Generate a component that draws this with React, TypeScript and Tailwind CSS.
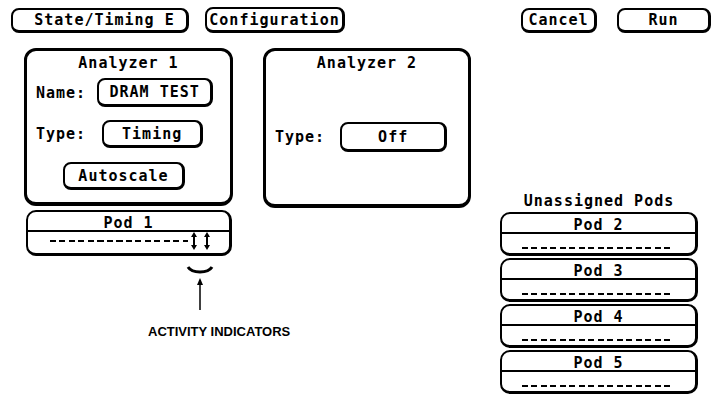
import type { ReactNode } from "react";

const mono = "font-['DejaVu_Sans_Mono',monospace] font-bold text-[15px] leading-[16px] tracking-[1px]";

function Btn({ children, className = "" }: { children: ReactNode; className?: string }) {
  return (
    <div
      className={`flex items-center justify-center rounded-[8px] border-2 border-b-[3px] border-r-[3px] border-black ${className}`}
    >
      {children}
    </div>
  );
}

function Dashes({ className = "" }: { className?: string }) {
  return (
    <div
      className={`h-[2px] bg-[repeating-linear-gradient(to_right,#000_0_6px,transparent_6px_9.5px)] ${className}`}
    />
  );
}

function Indicator() {
  return (
    <svg width="8" height="18" viewBox="0 0 8 18" className="shrink-0">
      <polygon points="4,0 1,5 7,5" fill="#000" />
      <line x1="4" y1="4" x2="4" y2="14" stroke="#000" strokeWidth="2" />
      <polygon points="1,13 7,13 4,18" fill="#000" />
    </svg>
  );
}

function Pod({ name, children, className = "" }: { name: string; children?: ReactNode; className?: string }) {
  return (
    <div className={`flex flex-col rounded-[10px] border-2 border-b-[3px] border-r-[3px] border-black ${className}`}>
      <div className="h-[20px] shrink-0 border-b-2 border-black pt-[3px] text-center">{name}</div>
      <div className="flex flex-1 items-end pb-[3px]">{children}</div>
    </div>
  );
}

export default function App() {
  return (
    <div className={`relative h-[396px] w-[713px] overflow-hidden bg-white text-black ${mono}`}>
      {/* top row */}
      <div className="flex items-start pl-[11px] pr-[2px] pt-[8px]">
        <Btn className="h-[25px] w-[178px] pl-[10px]">State/Timing E</Btn>
        <Btn className="ml-[16px] h-[26px] w-[140px] -mt-[1px]">Configuration</Btn>
        <Btn className="ml-auto h-[25px] w-[76px]">Cancel</Btn>
        <Btn className="ml-[20px] h-[25px] w-[94px]">Run</Btn>
      </div>

      <div className="mt-[15px] flex items-start">
        {/* Analyzer 1 column */}
        <div className="ml-[24px] flex w-[209px] flex-col">
          <div className="flex h-[158px] flex-col rounded-[12px] border-[3px] border-b-4 border-black pl-[9px]">
            <div className="pt-[4px] pr-[9px] text-center">Analyzer 1</div>
            <div className="mt-[7px] flex items-center">
              <span>Name:</span>
              <Btn className="ml-[11px] h-[29px] w-[116px]">DRAM TEST</Btn>
            </div>
            <div className="mt-[13px] flex items-center">
              <span>Type:</span>
              <Btn className="ml-[16px] h-[28px] w-[101px]">Timing</Btn>
            </div>
            <Btn className="ml-[27px] mt-[14px] h-[28px] w-[122px]">Autoscale</Btn>
          </div>

          <Pod name="Pod 1" className="ml-[2px] mt-[4px] h-[46px] w-[206px]">
            <div className="mb-[4px] flex items-center">
              <Dashes className="ml-[22px] w-[138px]" />
              <div className="ml-[2px] flex gap-[5px]">
                <Indicator />
                <Indicator />
              </div>
            </div>
          </Pod>

          <svg width="28" height="48" viewBox="0 0 28 48" className="ml-[162px] mt-[9px]">
            <path d="M2 2 Q5 7 14 7 Q23 7 26 2" fill="none" stroke="#000" strokeWidth="3" />
            <polygon points="14,13 11,20 17,20" fill="#000" />
            <line x1="14" y1="19" x2="14" y2="45" stroke="#000" strokeWidth="1.5" />
          </svg>
          <div className="ml-[124px] mt-[12px] whitespace-nowrap font-['Liberation_Sans',Arial,sans-serif] text-[13px] leading-none tracking-normal">
            ACTIVITY INDICATORS
          </div>
        </div>

        {/* Analyzer 2 */}
        <div className="ml-[30px] flex h-[160px] w-[208px] flex-col rounded-[12px] border-[3px] border-b-4 border-black pl-[9px]">
          <div className="pt-[4px] pr-[9px] text-center">Analyzer 2</div>
          <div className="mt-[51px] flex items-center">
            <span>Type:</span>
            <Btn className="ml-[15px] h-[30px] w-[107px]">Off</Btn>
          </div>
        </div>

        {/* Unassigned pods */}
        <div className="ml-auto mr-[15px] flex w-[198px] flex-col">
          <div className="mt-[145px] text-center">Unassigned Pods</div>
          <div className="mt-[3px] flex flex-col gap-[2px]">
            {["Pod 2", "Pod 3", "Pod 4", "Pod 5"].map((p) => (
              <Pod key={p} name={p} className="h-[44px]">
                <Dashes className="mb-[1px] ml-[20px] w-[152px]" />
              </Pod>
            ))}
          </div>
        </div>
      </div>
    </div>
  );
}
